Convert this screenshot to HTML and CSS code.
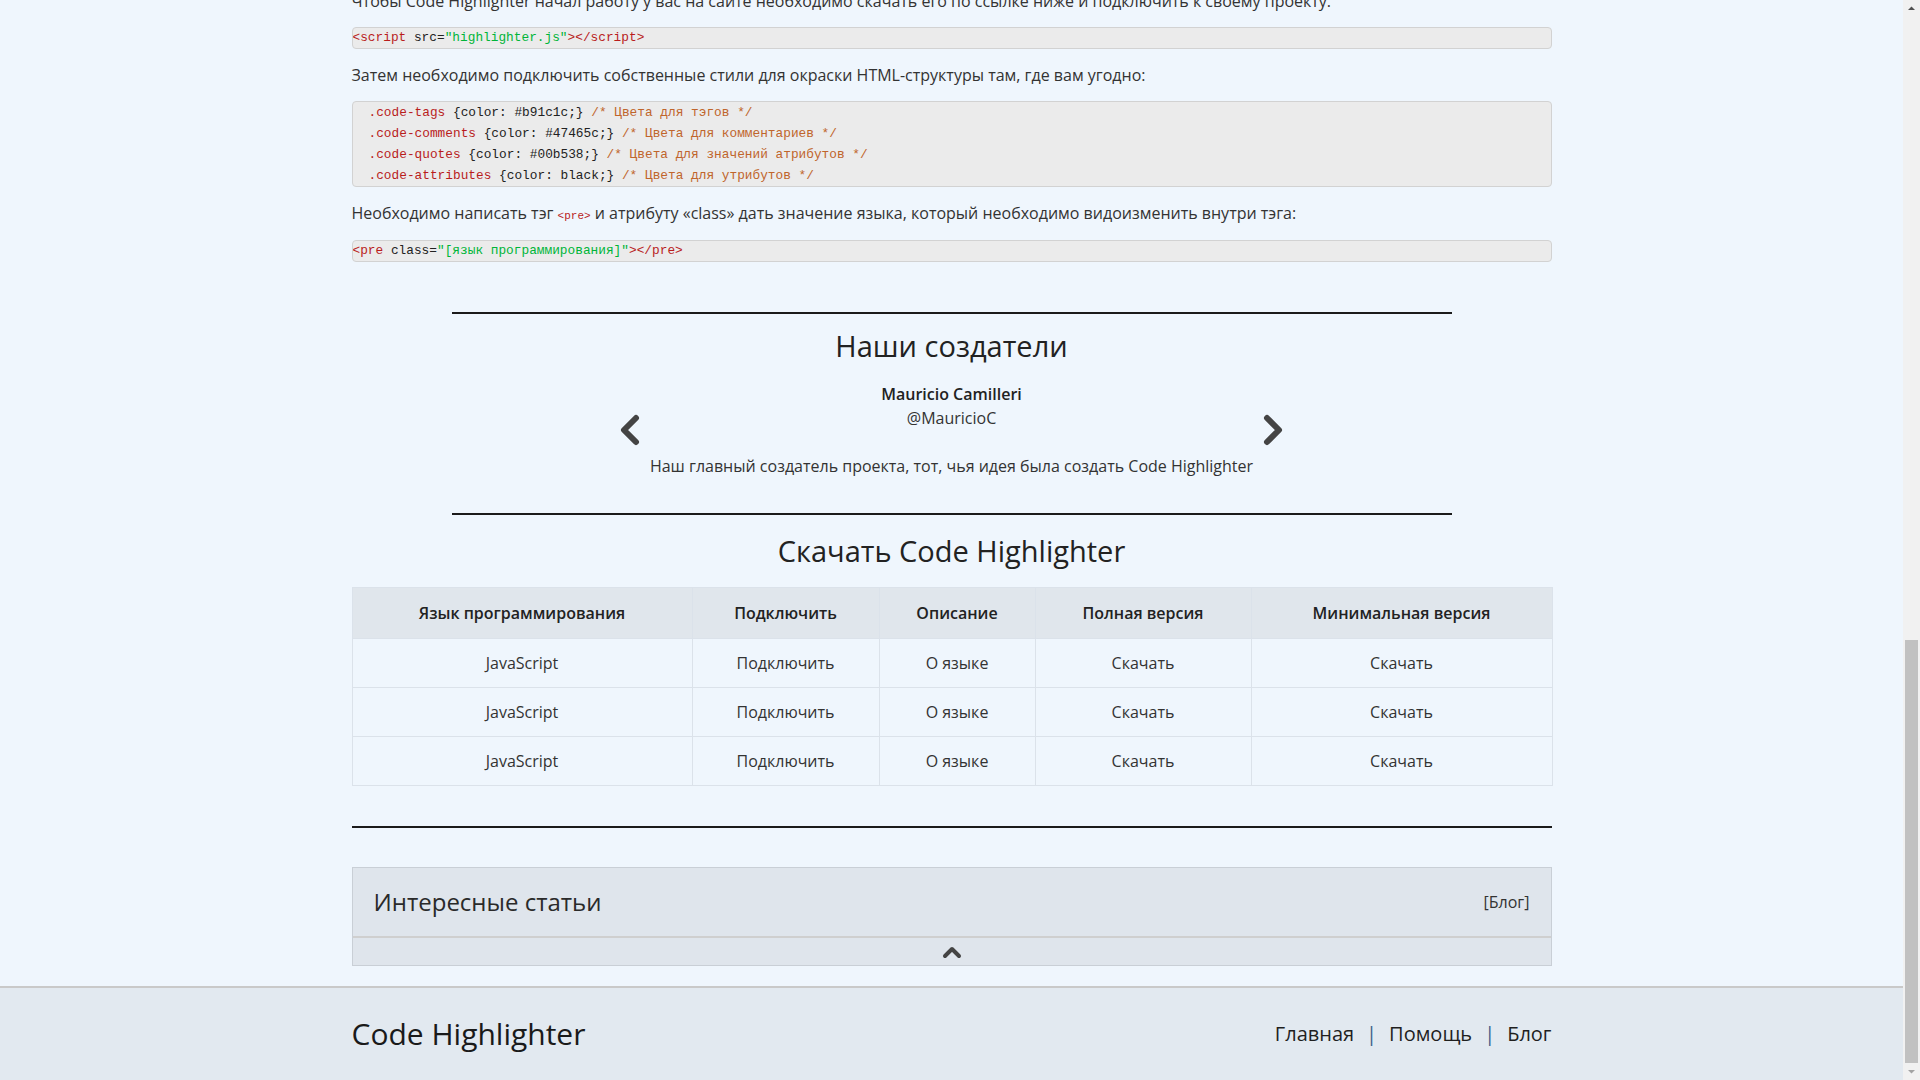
FILE: index.html
```html
<!DOCTYPE html>
<html lang="ru">
<head>
<meta charset="utf-8">
<title>Code Highlighter</title>
<link rel="stylesheet" href="styles.css">
</head>
<body>
<div class="viewport">
  <div class="page">
    <main class="container">
      <p class="text">Чтобы Code Highlighter начал работу у вас на сайте необходимо скачать его по ссылке ниже и подключить к своему проекту.</p>
      <pre class="code single"><span class="c-tag">&lt;script</span> src=<span class="c-str">"highlighter.js"</span><span class="c-tag">&gt;&lt;/script&gt;</span></pre>
      <p class="text">Затем необходимо подключить собственные стили для окраски HTML-структуры там, где вам угодно:</p>
      <pre class="code multi"><span class="line"><span class="c-tag">.code-tags</span> {color: #b91c1c;} <span class="c-com">/* Цвета для тэгов */</span></span><span class="line"><span class="c-tag">.code-comments</span> {color: #47465c;} <span class="c-com">/* Цвета для комментариев */</span></span><span class="line"><span class="c-tag">.code-quotes</span> {color: #00b538;} <span class="c-com">/* Цвета для значений атрибутов */</span></span><span class="line"><span class="c-tag">.code-attributes</span> {color: black;} <span class="c-com">/* Цвета для утрибутов */</span></span></pre>
      <p class="text">Необходимо написать тэг <code class="inline">&lt;pre&gt;</code> и атрибуту «class» дать значение языка, который необходимо видоизменить внутри тэга:</p>
      <pre class="code single code-last"><span class="c-tag">&lt;pre</span> class=<span class="c-str">"[язык программирования]"</span><span class="c-tag">&gt;&lt;/pre&gt;</span></pre>

      <section class="creators">
        <hr class="rule narrow rule-creators">
        <h2 class="title title-creators">Наши создатели</h2>
        <div class="carousel">
          <button class="arrow" aria-label="Назад">
            <svg width="20" height="32" viewBox="0 0 20 32"><polyline points="16,4 4,16 16,28" fill="none" stroke="#444" stroke-width="6" stroke-linecap="round" stroke-linejoin="round"/></svg>
          </button>
          <div class="slide">
            <div class="name">Mauricio Camilleri</div>
            <div class="handle">@MauricioC</div>
            <p class="bio">Наш главный создатель проекта, тот, чья идея была создать Code Highlighter</p>
          </div>
          <button class="arrow" aria-label="Вперёд">
            <svg width="20" height="32" viewBox="0 0 20 32"><polyline points="4,4 16,16 4,28" fill="none" stroke="#444" stroke-width="6" stroke-linecap="round" stroke-linejoin="round"/></svg>
          </button>
        </div>
      </section>

      <section class="download">
        <hr class="rule narrow rule-download">
        <h2 class="title title-download">Скачать Code Highlighter</h2>
        <table class="table">
          <thead>
            <tr>
              <th class="col-lang">Язык программирования</th>
              <th class="col-inc">Подключить</th>
              <th class="col-desc">Описание</th>
              <th class="col-full">Полная версия</th>
              <th class="col-min">Минимальная версия</th>
            </tr>
          </thead>
          <tbody>
            <tr><td>JavaScript</td><td>Подключить</td><td>О языке</td><td>Скачать</td><td>Скачать</td></tr>
            <tr><td>JavaScript</td><td>Подключить</td><td>О языке</td><td>Скачать</td><td>Скачать</td></tr>
            <tr><td>JavaScript</td><td>Подключить</td><td>О языке</td><td>Скачать</td><td>Скачать</td></tr>
          </tbody>
        </table>
      </section>

      <hr class="rule wide">

      <div class="card">
        <div class="card-head">
          <span class="card-title">Интересные статьи</span>
          <span class="card-link">[Блог]</span>
        </div>
        <div class="card-toggle">
          <svg width="22" height="14" viewBox="0 0 22 14"><polyline points="4,11 11,4 18,11" fill="none" stroke="#444" stroke-width="4" stroke-linecap="round" stroke-linejoin="round"/></svg>
        </div>
      </div>
    </main>

    <footer class="footer">
      <div class="footer-inner">
        <span class="brand">Code Highlighter</span>
        <nav class="footer-nav">
          <a class="footer-link">Главная</a>
          <span class="sep">|</span>
          <a class="footer-link">Помощь</a>
          <span class="sep">|</span>
          <a class="footer-link">Блог</a>
        </nav>
      </div>
    </footer>
  </div>

  <div class="scrollbar">
    <div class="sb-btn sb-up"><svg width="17" height="17" viewBox="0 0 17 17"><polygon points="5,10 8.5,6.5 12,10" fill="#505050"/></svg></div>
    <div class="sb-track">
      <div class="sb-space"></div>
      <div class="sb-thumb"></div>
    </div>
    <div class="sb-btn sb-down"><svg width="17" height="17" viewBox="0 0 17 17"><polygon points="5,7 8.5,10.5 12,7" fill="#a3a3a3"/></svg></div>
  </div>
</div>
</body>
</html>
```

FILE: styles.css
```css
* { box-sizing: border-box; }

html, body {
  margin: 0;
  padding: 0;
  height: 100%;
}

body {
  font-family: "Open Sans", "Noto Sans", sans-serif;
  font-size: 16px;
  line-height: 24px;
  color: #333;
  background: #eff6fd;
  overflow: hidden;
}

.viewport {
  display: flex;
  height: 100vh;
}

.page {
  flex: 1;
  display: flex;
  flex-direction: column;
  justify-content: flex-end;
  overflow: hidden;
  background: #eff6fd;
}

.page > * { flex-shrink: 0; }

.container {
  width: 1200px;
  margin: 0 auto 20px;
}

.text {
  margin: 0;
  color: #333;
}

.code {
  margin: 14px 0;
  background: #ebebeb;
  border: 1px solid #d2d2d2;
  border-radius: 4px;
  font-family: "Liberation Mono", "DejaVu Sans Mono", monospace;
  font-size: 12.8px;
  color: #222;
  white-space: pre;
  overflow: hidden;
}

.code.single {
  line-height: 20px;
  padding: 0;
}

.code.code-last {
  margin-top: 12px;
}

.code.multi {
  line-height: 21px;
  padding: 0 0 0 16px;
  display: flex;
  flex-direction: column;
}

.c-tag { color: #b91c1c; }
.c-str { color: #00b538; }
.c-com { color: #c0652b; }

.inline {
  font-family: "Liberation Mono", "DejaVu Sans Mono", monospace;
  font-size: 11px;
  color: #b91c1c;
}

.rule {
  border: 0;
  border-top: 2px solid #1b1b1b;
  margin: 0 auto;
  height: 0;
}

.rule.narrow { width: 1000px; }
.rule.wide { width: 100%; margin-top: 40px; }
.rule-creators { margin-top: 50px; }
.rule-download { margin-top: 35px; }

.title {
  margin: 0;
  font-size: 29px;
  line-height: 40px;
  font-weight: 400;
  color: #222;
  text-align: center;
}

.title-creators { margin-top: 12px; }
.title-download { margin-top: 16px; }

.carousel {
  width: 664px;
  margin: 16px auto 0;
  display: flex;
  align-items: center;
  justify-content: space-between;
}

.arrow {
  background: none;
  border: 0;
  padding: 0;
  width: 20px;
  height: 32px;
  display: flex;
}

.slide {
  text-align: center;
  color: #333;
}

.name {
  font-weight: 600;
  color: #222;
}

.handle { color: #333; }

.bio {
  margin: 24px 0 0;
}

.table {
  width: 1200px;
  margin-top: 16px;
  border-collapse: collapse;
  table-layout: fixed;
  border: 1px solid #dbe2ea;
}

.col-lang { width: 340px; }
.col-inc { width: 187px; }
.col-desc { width: 156px; }
.col-full { width: 216px; }
.col-min { width: 301px; }

.table th {
  background: #e0e6ec;
  color: #222;
  font-weight: 600;
  padding: 13px 8px;
  border-left: 1px solid #dbe2ea;
  text-align: center;
}

.table td {
  padding: 12px 8px;
  text-align: center;
  border: 1px solid #dbe2ea;
  color: #333;
}

.card {
  margin-top: 39px;
  border: 1px solid #c9cfd6;
  background: #dfe5ec;
}

.card-head {
  display: flex;
  align-items: center;
  justify-content: space-between;
  padding: 18px 21px 18px 21px;
}

.card-title {
  font-size: 24px;
  line-height: 32px;
  color: #2a2a2a;
}

.card-link {
  font-size: 16px;
  color: #333;
}

.card-toggle {
  border-top: 2px solid #cfcfcf;
  height: 29px;
  display: flex;
  align-items: center;
  justify-content: center;
}

.footer {
  border-top: 2px solid #c9c9c9;
  background: #e2e9f0;
  height: 94px;
  display: flex;
  align-items: center;
}

.footer-inner {
  width: 1200px;
  margin: 0 auto;
  display: flex;
  align-items: center;
  justify-content: space-between;
}

.brand {
  font-size: 30px;
  line-height: 38px;
  color: #1a1a1a;
}

.footer-nav {
  display: flex;
  align-items: center;
  gap: 12px;
  font-size: 20px;
  line-height: 28px;
}

.footer-link {
  color: #1f1f1f;
  text-decoration: none;
}

.sep {
  color: #3b5f8a;
}

.scrollbar {
  width: 17px;
  flex-shrink: 0;
  background: #f1f1f1;
  display: flex;
  flex-direction: column;
}

.sb-btn {
  height: 17px;
  display: flex;
}

.sb-track {
  flex: 1;
  display: flex;
  flex-direction: column;
  padding: 0 2px;
}

.sb-space { flex: 1; }

.sb-thumb {
  height: 423px;
  background: #c1c1c1;
}
```
